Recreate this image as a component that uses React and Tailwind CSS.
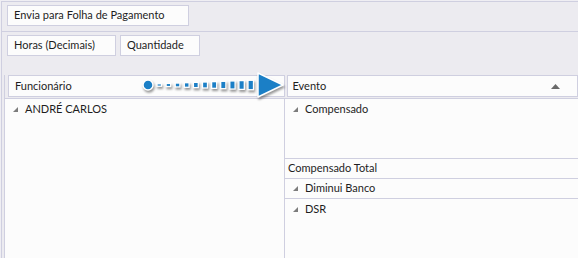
import React from 'react';

const line = 'border-[#cfcfe0]';

function Expander() {
  return (
    <svg width="5" height="5" viewBox="0 0 5 5" className="shrink-0">
      <polygon points="5,0 5,5 0,5" fill="#7c7c7c" />
    </svg>
  );
}

function Field({ label, className }) {
  return (
    <div className={`h-[21px] flex items-center pl-[6px] bg-[#fcfcfc] border ${line} ${className}`}>
      {label}
    </div>
  );
}

function GroupRow({ label, indent = true, className = '' }) {
  return (
    <div className={`h-[20px] flex items-center gap-[7px] ${indent ? 'pl-[8px]' : 'pl-[3px]'} ${className}`}>
      {indent && <Expander />}
      <span>{label}</span>
    </div>
  );
}

function Arrow() {
  const dashes = Array.from({ length: 11 }, (_, i) => {
    const h = 2.5 + i * 0.7;
    return { x: 157 + i * 9.1, w: 4.5 + i * 0.1, h };
  });
  return (
    <svg
      width="150"
      height="40"
      viewBox="140 66 150 40"
      className="absolute left-[140px] top-[66px] drop-shadow-[1px_2px_1px_rgba(0,0,0,0.4)]"
    >
      {dashes.map((d, i) => (
        <rect
          key={i}
          x={d.x}
          y={85 - d.h / 2}
          width={d.w}
          height={d.h}
          fill="#1b7fc6"
          stroke="#fff"
          strokeWidth="1.3"
        />
      ))}
      <circle cx="148" cy="85" r="5" fill="#1b7fc6" stroke="#fff" strokeWidth="1.5" />
      <polygon points="258,73 283,85 258,97" fill="#1b7fc6" stroke="#fff" strokeWidth="1.5" strokeLinejoin="round" />
    </svg>
  );
}

export default function App() {
  return (
    <div className="w-[578px] h-[258px] bg-[#efeef3] pl-px pt-px relative overflow-hidden font-['Lato',sans-serif] text-[11px] text-[#1e1e1e]">
      <div className={`h-full flex flex-col border-l border-t ${line} bg-[#ecebf0]`}>
        <div className={`h-[30px] shrink-0 border-b ${line} pl-[5px] pt-[3px]`}>
          <Field label="Envia para Folha de Pagamento" className="w-[182px]" />
        </div>
        <div className="h-[43px] shrink-0 pl-[5px] pt-[3px] flex gap-[4px] items-start">
          <Field label="Horas (Decimais)" className="w-[109px]" />
          <Field label="Quantidade" className="w-[80px] pl-[5px]" />
        </div>
        <div className={`flex-1 flex flex-col ml-[2px] border-l ${line}`}>
          <div className={`h-[24px] shrink-0 flex gap-[2px] pl-[3px] border-b ${line}`}>
            <div className={`w-[277px] h-[22px] flex items-center pl-[6px] bg-[#fcfcfc] border ${line}`}>
              Funcionário
            </div>
            <div className={`w-[292px] h-[22px] flex items-center justify-between pl-[5px] pr-[17px] bg-[#fcfcfc] border ${line}`}>
              <span>Evento</span>
              <svg width="9" height="5" viewBox="0 0 9 5">
                <polygon points="4.5,0 9,5 0,5" fill="#6a6a6a" />
              </svg>
            </div>
          </div>
          <div className="flex-1 flex bg-[#fcfcfc]">
            <div className={`w-[280px] shrink-0 border-r ${line}`}>
              <GroupRow label="ANDRÉ CARLOS" className="pl-[8px]" />
            </div>
            <div className="flex-1 flex flex-col">
              <div className={`h-[60px] border-b ${line}`}>
                <GroupRow label="Compensado" />
              </div>
              <GroupRow label="Compensado Total" indent={false} className={`border-b ${line}`} />
              <GroupRow label="Diminui Banco" className={`border-b ${line}`} />
              <GroupRow label="DSR" className="h-[19px]" />
            </div>
          </div>
        </div>
      </div>
      <Arrow />
    </div>
  );
}
